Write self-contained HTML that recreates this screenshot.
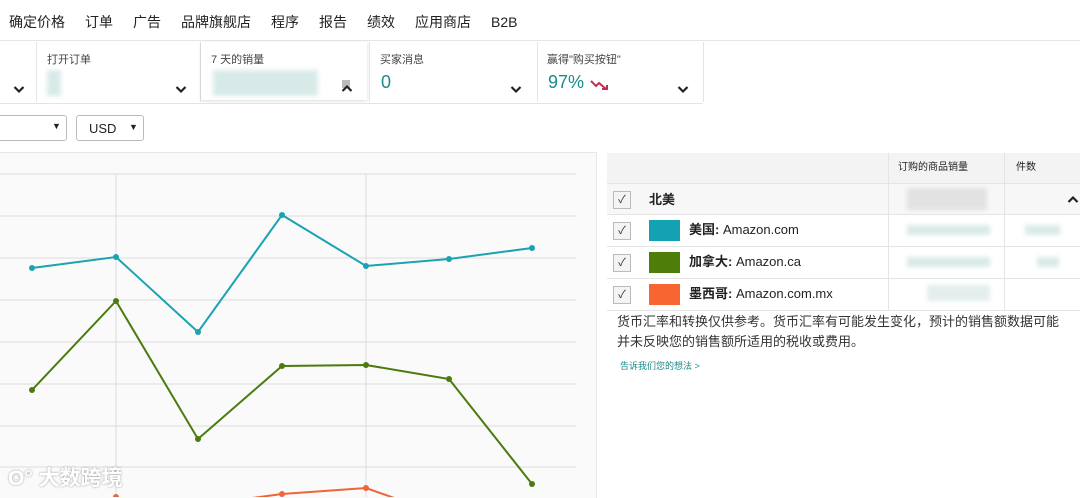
<!DOCTYPE html><html><head><meta charset="utf-8"><style>
body{margin:0;width:1080px;height:497px;overflow:hidden;background:#fff;font-family:"Liberation Sans","Noto Sans CJK SC",sans-serif;color:#222;position:relative}
.a{position:absolute}
.nav span{margin-right:20px}
.card{position:absolute;top:42px;height:60px;border-right:1px solid #e4e4e4}
.lbl{font-size:11px;color:#444;position:absolute;top:9px;left:10px}
.chev{position:absolute}
.blur{position:absolute;background:#cfe6e3;opacity:.8;filter:blur(2px)}
.row{position:absolute;left:607px;width:473px;border-bottom:1px solid #e4e4e4;font-size:13px;line-height:16px}
.cb{position:absolute;left:6px;width:16px;height:16px;border:1px solid #bbb;background:#f4f4f4;font-size:11px;text-align:center;line-height:16px;color:#333}
.sw{position:absolute;left:42px;width:31px;height:21px}
</style></head><body>
<div class="a nav" style="left:9px;top:12px;font-size:14px;color:#222"><span>确定价格</span><span>订单</span><span>广告</span><span>品牌旗舰店</span><span>程序</span><span>报告</span><span>绩效</span><span>应用商店</span><span>B2B</span></div>
<div class="a" style="left:0;top:40px;width:1080px;height:1px;background:#e6e6e6"></div>
<div class="card" style="left:0;width:36px"><svg class="chev" style="left:13px;top:43px" width="12" height="9"><path d="M1.5 2l4.5 4.5 4.5-4.5" stroke="#222" stroke-width="2.2" fill="none"/></svg></div>
<div class="card" style="left:37px;width:163px"><div class="lbl">打开订单</div><div class="blur" style="left:10px;top:28px;width:14px;height:26px"></div><svg class="chev" style="left:138px;top:43px" width="12" height="9"><path d="M1.5 2l4.5 4.5 4.5-4.5" stroke="#222" stroke-width="2.2" fill="none"/></svg></div>
<div class="card" style="left:201px;width:166px;border-right:none;box-shadow:0 1px 3px rgba(0,0,0,.15);height:58px"><div class="lbl">7 天的销量</div><div class="blur" style="left:12px;top:28px;width:105px;height:26px"></div><div class="a" style="left:141px;top:38px;width:8px;height:8px;background:#bbb"></div><svg class="chev" style="left:140px;top:42px" width="12" height="9"><path d="M1.5 7l4.5-4.5 4.5 4.5" stroke="#222" stroke-width="2.2" fill="none"/></svg></div>
<div class="card" style="left:369px;width:167px;border-left:1px solid #e4e4e4"><div class="lbl">买家消息</div><div class="a" style="left:11px;top:30px;font-size:18px;color:#1b8a8a">0</div><svg class="chev" style="left:140px;top:43px" width="12" height="9"><path d="M1.5 2l4.5 4.5 4.5-4.5" stroke="#222" stroke-width="2.2" fill="none"/></svg></div>
<div class="card" style="left:537px;width:166px"><div class="lbl">赢得"购买按钮"</div><div class="a" style="left:11px;top:30px;font-size:18px;color:#1b8a8a">97%</div><svg class="a" style="left:52px;top:36px" width="22" height="14"><path d="M2 3l5 5 3-3 7 6" stroke="#c03050" stroke-width="2" fill="none"/><path d="M13 11h5v-4" stroke="#c03050" stroke-width="2" fill="none"/></svg><svg class="chev" style="left:140px;top:43px" width="12" height="9"><path d="M1.5 2l4.5 4.5 4.5-4.5" stroke="#222" stroke-width="2.2" fill="none"/></svg></div>
<div class="a" style="left:0;top:103px;width:703px;height:1px;background:#e4e4e4"></div>
<div class="a" style="left:-5px;top:115px;width:70px;height:24px;border:1px solid #bbb;border-radius:3px"><span class="a" style="left:56px;top:5px;font-size:9px">▼</span></div>
<div class="a" style="left:76px;top:115px;width:66px;height:24px;border:1px solid #bbb;border-radius:3px;font-size:13px"><span class="a" style="left:12px;top:5px">USD</span><span class="a" style="left:52px;top:6px;font-size:9px">▼</span></div>
<div class="a" style="left:0;top:152px;width:596px;height:345px;background:#fafafa;border-top:1px solid #e8e8e8;border-right:1px solid #e8e8e8"></div>
<svg class="a" style="left:0;top:0" width="600" height="497">
<g stroke="#dcdcdc" stroke-width="1">
<line x1="0" y1="174" x2="576" y2="174"/><line x1="0" y1="216" x2="576" y2="216"/><line x1="0" y1="258" x2="576" y2="258"/><line x1="0" y1="300" x2="576" y2="300"/><line x1="0" y1="342" x2="576" y2="342"/><line x1="0" y1="384" x2="576" y2="384"/><line x1="0" y1="426" x2="576" y2="426"/><line x1="0" y1="467" x2="576" y2="467"/>
<line x1="116" y1="174" x2="116" y2="497"/><line x1="366" y1="174" x2="366" y2="497"/></g>
<polyline fill="none" stroke="#1ba3b3" stroke-width="2" points="32,268 116,257 198,332 282,215 366,266 449,259 532,248"/>
<polyline fill="none" stroke="#4b7a0f" stroke-width="2" points="32,390 116,301 198,439 282,366 366,365 449,379 532,484"/>
<polyline fill="none" stroke="#f0643a" stroke-width="2" points="200,505 282,494 366,488 400,500"/>
<g fill="#1ba3b3"><circle cx="32" cy="268" r="3"/><circle cx="116" cy="257" r="3"/><circle cx="198" cy="332" r="3"/><circle cx="282" cy="215" r="3"/><circle cx="366" cy="266" r="3"/><circle cx="449" cy="259" r="3"/><circle cx="532" cy="248" r="3"/></g>
<g fill="#4b7a0f"><circle cx="32" cy="390" r="3"/><circle cx="116" cy="301" r="3"/><circle cx="198" cy="439" r="3"/><circle cx="282" cy="366" r="3"/><circle cx="366" cy="365" r="3"/><circle cx="449" cy="379" r="3"/><circle cx="532" cy="484" r="3"/></g>
<g fill="#f0643a"><circle cx="116" cy="497" r="3"/><circle cx="282" cy="494" r="3"/><circle cx="366" cy="488" r="3"/></g>
</svg>
<div class="a" style="left:8px;top:462px;font-size:21px;color:#fff;text-shadow:0 0 2px #999;font-weight:bold">ʘ° 大数跨境</div>
<div class="row" style="top:153px;height:30px;background:#f3f3f3;font-size:10px"><span class="a" style="left:291px;top:7px">订购的商品销量</span><span class="a" style="left:409px;top:7px">件数</span></div>
<div class="row" style="top:184px;height:30px;background:#f7f7f7"><div class="cb" style="top:7px">✓</div><b class="a" style="left:42px;top:8px">北美</b><svg class="a" style="left:460px;top:11px" width="12" height="9"><path d="M1.5 7l4.5-4.5 4.5 4.5" stroke="#222" stroke-width="2.2" fill="none"/></svg><div class="blur" style="left:300px;top:4px;width:80px;height:22px;background:#ddd"></div></div>
<div class="row" style="top:215px;height:31px"><div class="cb" style="top:7px">✓</div><div class="sw" style="top:5px;background:#12a2b4"></div><span class="a" style="left:82px;top:7px"><b>美国:</b> Amazon.com</span><div class="blur" style="left:300px;top:10px;width:83px;height:10px"></div><div class="blur" style="left:418px;top:10px;width:35px;height:10px"></div></div>
<div class="row" style="top:247px;height:31px"><div class="cb" style="top:7px">✓</div><div class="sw" style="top:5px;background:#4e7d0a"></div><span class="a" style="left:82px;top:7px"><b>加拿大:</b> Amazon.ca</span><div class="blur" style="left:300px;top:10px;width:83px;height:10px"></div><div class="blur" style="left:430px;top:10px;width:22px;height:10px"></div></div>
<div class="row" style="top:279px;height:31px"><div class="cb" style="top:7px">✓</div><div class="sw" style="top:5px;background:#f86530"></div><span class="a" style="left:82px;top:7px"><b>墨西哥:</b> Amazon.com.mx</span><div class="blur" style="left:320px;top:6px;width:63px;height:16px;background:#dde9ea"></div></div>
<div class="a" style="left:888px;top:153px;width:1px;height:158px;background:#e4e4e4"></div>
<div class="a" style="left:1004px;top:153px;width:1px;height:158px;background:#e4e4e4"></div>
<div class="a" style="left:617px;top:312px;font-size:13px;line-height:20px;color:#333;width:460px">货币汇率和转换仅供参考。货币汇率有可能发生变化，预计的销售额数据可能<br>并未反映您的销售额所适用的税收或费用。</div>
<div class="a" style="left:620px;top:359px;font-size:9px;color:#1b8a8a">告诉我们您的想法 &gt;</div>
</body></html>
